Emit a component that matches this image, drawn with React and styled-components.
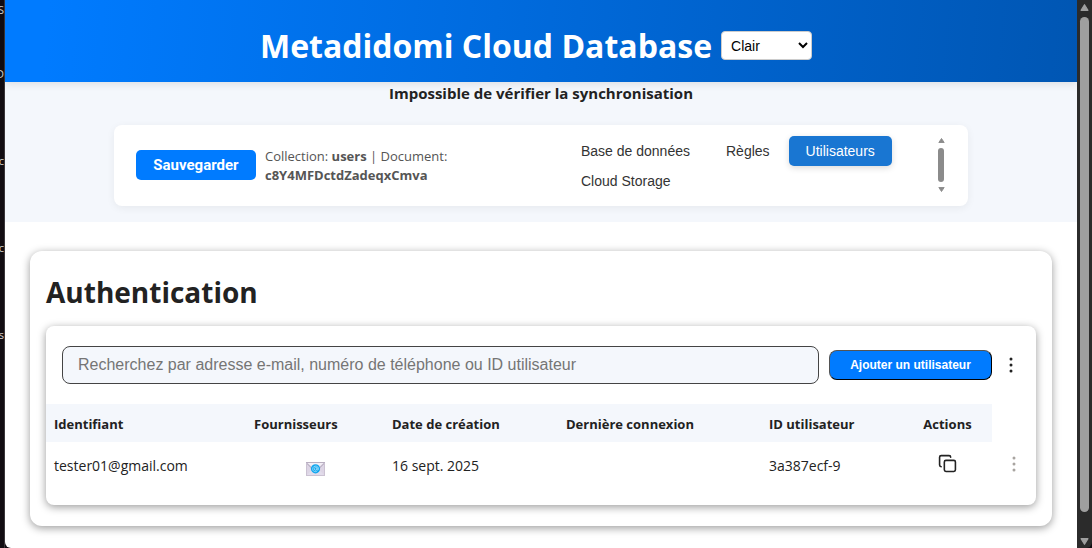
import React from "react";
import styled, { createGlobalStyle } from "styled-components";
import { Copy } from "lucide-react";

const ui = `"Segoe UI", "Open Sans", "Noto Sans", sans-serif`;
const control = `Arial, "Liberation Sans", sans-serif`;

const GlobalStyle = createGlobalStyle`
  *, *::before, *::after { box-sizing: border-box; }
  body { margin: 0; background: #120d12; color: #222; font-family: ${ui}; }
  h1, h2, p { margin: 0; }
  button, input, select { margin: 0; font-family: ${control}; }
`;

const Shell = styled.div`
  display: grid;
  grid-template-columns: 5px minmax(0, 1fr) 15px;
  min-height: 100vh;
`;

const Backdrop = styled.aside`
  display: flex;
  flex-direction: column;
  border-right: 1px solid #3a363a;
  overflow: hidden;
  height: 100vh;
`;

const BackdropLine = styled.span`
  display: flex;
  justify-content: flex-end;
  flex: none;
  height: ${(p) => p.$height}px;
  font-size: 11px;
  line-height: 20px;
  color: #d8d4d0;
`;

const Page = styled.div`
  background: #fff;
  border-bottom-left-radius: 6px;
`;

const Header = styled.header`
  display: flex;
  align-items: center;
  justify-content: center;
  gap: 9px;
  height: 82px;
  padding: 9px 10px 0 0;
  background: linear-gradient(95deg, #007bff 4%, #0056b3);
  box-shadow: 0 2px 8px rgba(0, 0, 0, 0.1);
  position: relative;
`;

const Title = styled.h1`
  font-size: 32px;
  line-height: 44px;
  font-weight: 700;
  color: #fff;
  white-space: nowrap;
`;

const ThemeSelect = styled.select`
  width: 91px;
  height: 29px;
  padding: 0 0 0 5px;
  border: 1px solid #ccc;
  border-radius: 4px;
  background: #fff;
  color: #000;
  font-size: 14px;
`;

const Controls = styled.section`
  height: 140px;
  padding: 0 109px;
  background: #f4f7fc;
`;

const Status = styled.p`
  height: 43px;
  font-size: 15px;
  line-height: 22px;
  font-weight: 700;
  text-align: center;
`;

const Toolbar = styled.div`
  display: flex;
  align-items: center;
  height: 81px;
  padding: 0 22px 1px;
  border-radius: 8px;
  background: #fff;
  box-shadow: 0 2px 8px rgba(0, 0, 0, 0.06);
`;

const SaveButton = styled.button`
  flex: none;
  width: 120px;
  height: 30px;
  padding: 0;
  border: 0;
  border-radius: 5px;
  background: #007bff;
  color: #fff;
  font: 700 15px/30px Roboto, sans-serif;
`;

const DocPath = styled.p`
  flex: 1;
  padding: 2px 0 0 9px;
  font-size: 13px;
  line-height: 19px;
  color: #555;
`;

const Tabs = styled.nav`
  display: flex;
  flex-wrap: wrap;
  column-gap: 2px;
  width: 372px;
  padding-top: 2px;
`;

const Tab = styled.button`
  height: 30px;
  padding: 0 17px;
  border: 0;
  border-radius: 5px;
  font-size: 14px;
  line-height: 30px;
  background: ${(p) => (p.$active ? "#1976d2" : "transparent")};
  color: ${(p) => (p.$active ? "#fff" : "#333")};
  box-shadow: ${(p) => (p.$active ? "0 2px 6px rgba(0, 0, 0, 0.15)" : "none")};
`;

const MiniScroll = styled.div`
  display: flex;
  flex-direction: column;
  align-items: center;
  justify-content: space-between;
  width: 10px;
  height: 54px;
`;

const MiniThumb = styled.div`
  width: 6px;
  height: 34px;
  border-radius: 3px;
  background: #8b8b8b;
`;

const Content = styled.main`
  padding: 29px 25px 22px;
`;

const Card = styled.section`
  padding: 16px 16px 21px;
  border-radius: 12px;
  background: #fff;
  box-shadow: 0 2px 8px rgba(0, 0, 0, 0.4);
`;

const SectionTitle = styled.h2`
  height: 59px;
  font-size: 28px;
  line-height: 50px;
  font-weight: 700;
`;

const UsersPanel = styled.div`
  height: 179px;
  padding-top: 20px;
  border-radius: 8px;
  background: #fff;
  box-shadow: 0 2px 8px rgba(0, 0, 0, 0.4);
`;

const SearchRow = styled.div`
  display: flex;
  align-items: center;
  gap: 10px;
  padding: 0 16px;
  margin-bottom: 20px;
`;

const SearchInput = styled.input`
  flex: 1;
  min-width: 0;
  height: 38px;
  padding: 0 15px;
  border: 1px solid #444;
  border-radius: 8px;
  background: #f4f7fc;
  color: #222;
  font-size: 16px;
  &::placeholder { color: #757575; }
`;

const AddButton = styled.button`
  width: 163px;
  height: 30px;
  padding: 0;
  border: 1px outset #000;
  border-radius: 8px;
  background: #007bff;
  color: #fff;
  font-size: 12px;
  font-weight: 700;
`;

const IconButton = styled.button`
  display: inline-flex;
  align-items: center;
  justify-content: center;
  width: ${(p) => p.$width || 20}px;
  height: 20px;
  padding: 0;
  border: 0;
  background: transparent;
  color: ${(p) => p.$color || "#222"};
  vertical-align: middle;
`;

const UsersTable = styled.table`
  width: 100%;
  table-layout: fixed;
  border-collapse: collapse;
  font-size: 13px;
  line-height: 20px;
`;

const Col = styled.col`
  width: ${(p) => p.$width}px;
`;

const Th = styled.th`
  height: 38px;
  padding: 2px 8px 0;
  background: #f4f7fc;
  text-align: ${(p) => p.$align || "left"};
  font-weight: 700;
  white-space: nowrap;
`;

const BlankTh = styled.td`
  padding: 0;
`;

const Td = styled.td`
  height: 44px;
  padding: ${(p) => (p.$icon ? "0 8px 2px" : "4px 8px 0")};
  text-align: ${(p) => p.$align || "left"};
  font-size: 14px;
`;

const MailGlyph = styled.svg`
  display: block;
  margin: 12px auto 0;
`;

const ScrollTrack = styled.div`
  position: sticky;
  top: 0;
  display: flex;
  flex-direction: column;
  align-items: center;
  height: 100vh;
  padding: 4px 0 3px;
  background: #2b2b2b;
  border-bottom-right-radius: 6px;
`;

const ScrollThumb = styled.div`
  flex: 1;
  width: 9px;
  margin: 6px 0 26px;
  border-radius: 5px;
  background: #9f9f9f;
`;

function Arrow({ size, height, color, down }) {
  return (
    <svg width={size} height={height} viewBox="0 0 10 8" preserveAspectRatio="none" aria-hidden="true">
      <path
        d={down ? "M1.2 .8h7.6L5 7.2z" : "M1.2 7.2h7.6L5 .8z"}
        fill={color}
        stroke={color}
        strokeWidth="1.4"
        strokeLinejoin="round"
      />
    </svg>
  );
}

function Dots() {
  return (
    <svg width="4" height="16" viewBox="0 0 4 16" fill="currentColor" aria-hidden="true">
      <circle cx="2" cy="2" r="1.5" />
      <circle cx="2" cy="8" r="1.5" />
      <circle cx="2" cy="14" r="1.5" />
    </svg>
  );
}

function Mail() {
  return (
    <MailGlyph width="19" height="14" viewBox="0 0 19 14" role="img" aria-label="E-mail">
      <rect width="19" height="14" rx=".6" fill="#ddd5e5" />
      <path d="M0 14 7 6.5h5L19 14z" fill="#e2dceb" />
      <path d="M0 .5 7 7.5M19 .5l-7 7" stroke="#aaa0b4" strokeWidth="1" />
      <path d="M.5 0h18L9.5 8z" fill="#f3eff6" />
      <path d="M0 .5h19" stroke="#b9afc1" />
      <path d="M0 13.5h19M.5 1v12M18.5 1v12" stroke="#cbc2d2" />
      <circle cx="9.5" cy="6.8" r="4.6" fill="#10a5ed" />
      <path
        d="M11.1 5.2v2.2c0 1.2 1.5.9 1.4-.7-.1-3.6-5.8-3.4-5.8.2 0 2.8 2.7 3.2 4.2 2.4M11 6.8c0 2-2.7 2-2.7 0s2.7-2 2.7 0z"
        fill="none"
        stroke="#b9e9ff"
        strokeWidth=".7"
      />
    </MailGlyph>
  );
}

const columns = [200, 138, 174, 203, 142, 89, 44];
const backdropLines = [
  { text: "S", height: 64 },
  { text: "D", height: 87 },
  { text: "oc", height: 87 },
  { text: "ic", height: 87 },
  { text: "is", height: 20 },
];

export default function App() {
  return (
    <>
      <GlobalStyle />
      <Shell>
        <Backdrop aria-hidden="true">
          {backdropLines.map((line) => (
            <BackdropLine key={line.text} $height={line.height}>{line.text}</BackdropLine>
          ))}
        </Backdrop>
        <Page>
          <Header>
            <Title>Metadidomi Cloud Database</Title>
            <ThemeSelect aria-label="Thème" defaultValue="Clair">
              <option>Clair</option>
              <option>Sombre</option>
            </ThemeSelect>
          </Header>
          <Controls>
            <Status>Impossible de vérifier la synchronisation</Status>
            <Toolbar>
              <SaveButton type="button">Sauvegarder</SaveButton>
              <DocPath>
                Collection: <b>users</b> | Document:
                <br />
                <b>c8Y4MFDctdZadeqxCmva</b>
              </DocPath>
              <Tabs>
                <Tab type="button">Base de données</Tab>
                <Tab type="button">Règles</Tab>
                <Tab type="button" $active>Utilisateurs</Tab>
                <Tab type="button">Cloud Storage</Tab>
              </Tabs>
              <MiniScroll aria-hidden="true">
                <Arrow size="7" height="5" color="#8b8b8b" />
                <MiniThumb />
                <Arrow size="7" height="5" color="#8b8b8b" down />
              </MiniScroll>
            </Toolbar>
          </Controls>
          <Content>
            <Card>
              <SectionTitle>Authentication</SectionTitle>
              <UsersPanel>
                <SearchRow>
                  <SearchInput
                    type="text"
                    aria-label="Rechercher un utilisateur"
                    placeholder="Recherchez par adresse e-mail, numéro de téléphone ou ID utilisateur"
                  />
                  <AddButton type="button">Ajouter un utilisateur</AddButton>
                  <IconButton type="button" aria-label="Plus d'options" $width={18}>
                    <Dots />
                  </IconButton>
                </SearchRow>
                <UsersTable>
                  <colgroup>
                    {columns.map((w) => (
                      <Col key={w} $width={w} />
                    ))}
                  </colgroup>
                  <thead>
                    <tr>
                      <Th>Identifiant</Th>
                      <Th>Fournisseurs</Th>
                      <Th>Date de création</Th>
                      <Th>Dernière connexion</Th>
                      <Th>ID utilisateur</Th>
                      <Th $align="center">Actions</Th>
                      <BlankTh />
                    </tr>
                  </thead>
                  <tbody>
                    <tr>
                      <Td>tester01@gmail.com</Td>
                      <Td $icon><Mail /></Td>
                      <Td>16 sept. 2025</Td>
                      <Td />
                      <Td>3a387ecf-9</Td>
                      <Td $icon $align="center">
                        <IconButton type="button" aria-label="Copier">
                          <Copy size={19} />
                        </IconButton>
                      </Td>
                      <Td $icon $align="center">
                        <IconButton type="button" aria-label="Options de l'utilisateur" $color="#a8a4a0">
                          <Dots />
                        </IconButton>
                      </Td>
                    </tr>
                  </tbody>
                </UsersTable>
              </UsersPanel>
            </Card>
          </Content>
        </Page>
        <ScrollTrack aria-hidden="true">
          <Arrow size="9" height="7" color="#9f9f9f" />
          <ScrollThumb />
          <Arrow size="9" height="7" color="#9f9f9f" down />
        </ScrollTrack>
      </Shell>
    </>
  );
}
